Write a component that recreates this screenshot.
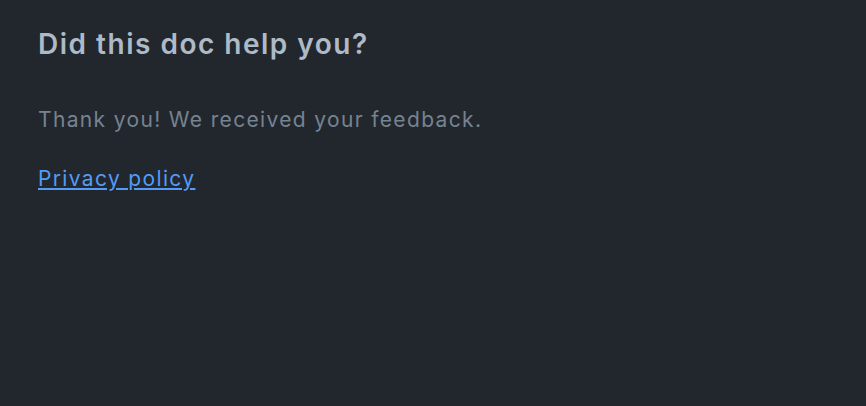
import React from 'react';

const App: React.FC = () => {
  return (
    <div className="min-h-screen w-full bg-[#22272e] font-['Inter',sans-serif]">
      <div className="px-[38px] pt-[26px]">
        <h2 className="text-[28px] leading-[36px] font-semibold tracking-[1.5px] text-[#adbac7]">Did this doc help you?</h2>
        <p className="mt-[43px] text-[21px] leading-[30px] tracking-[1.35px] text-[#768390]">Thank you! We received your feedback.</p>
        <a href="#" className="mt-[29px] inline-block text-[21px] leading-[30px] tracking-[1.35px] text-[#539bf5] underline">
          Privacy policy
        </a>
      </div>
    </div>
  );
};

export default App;
